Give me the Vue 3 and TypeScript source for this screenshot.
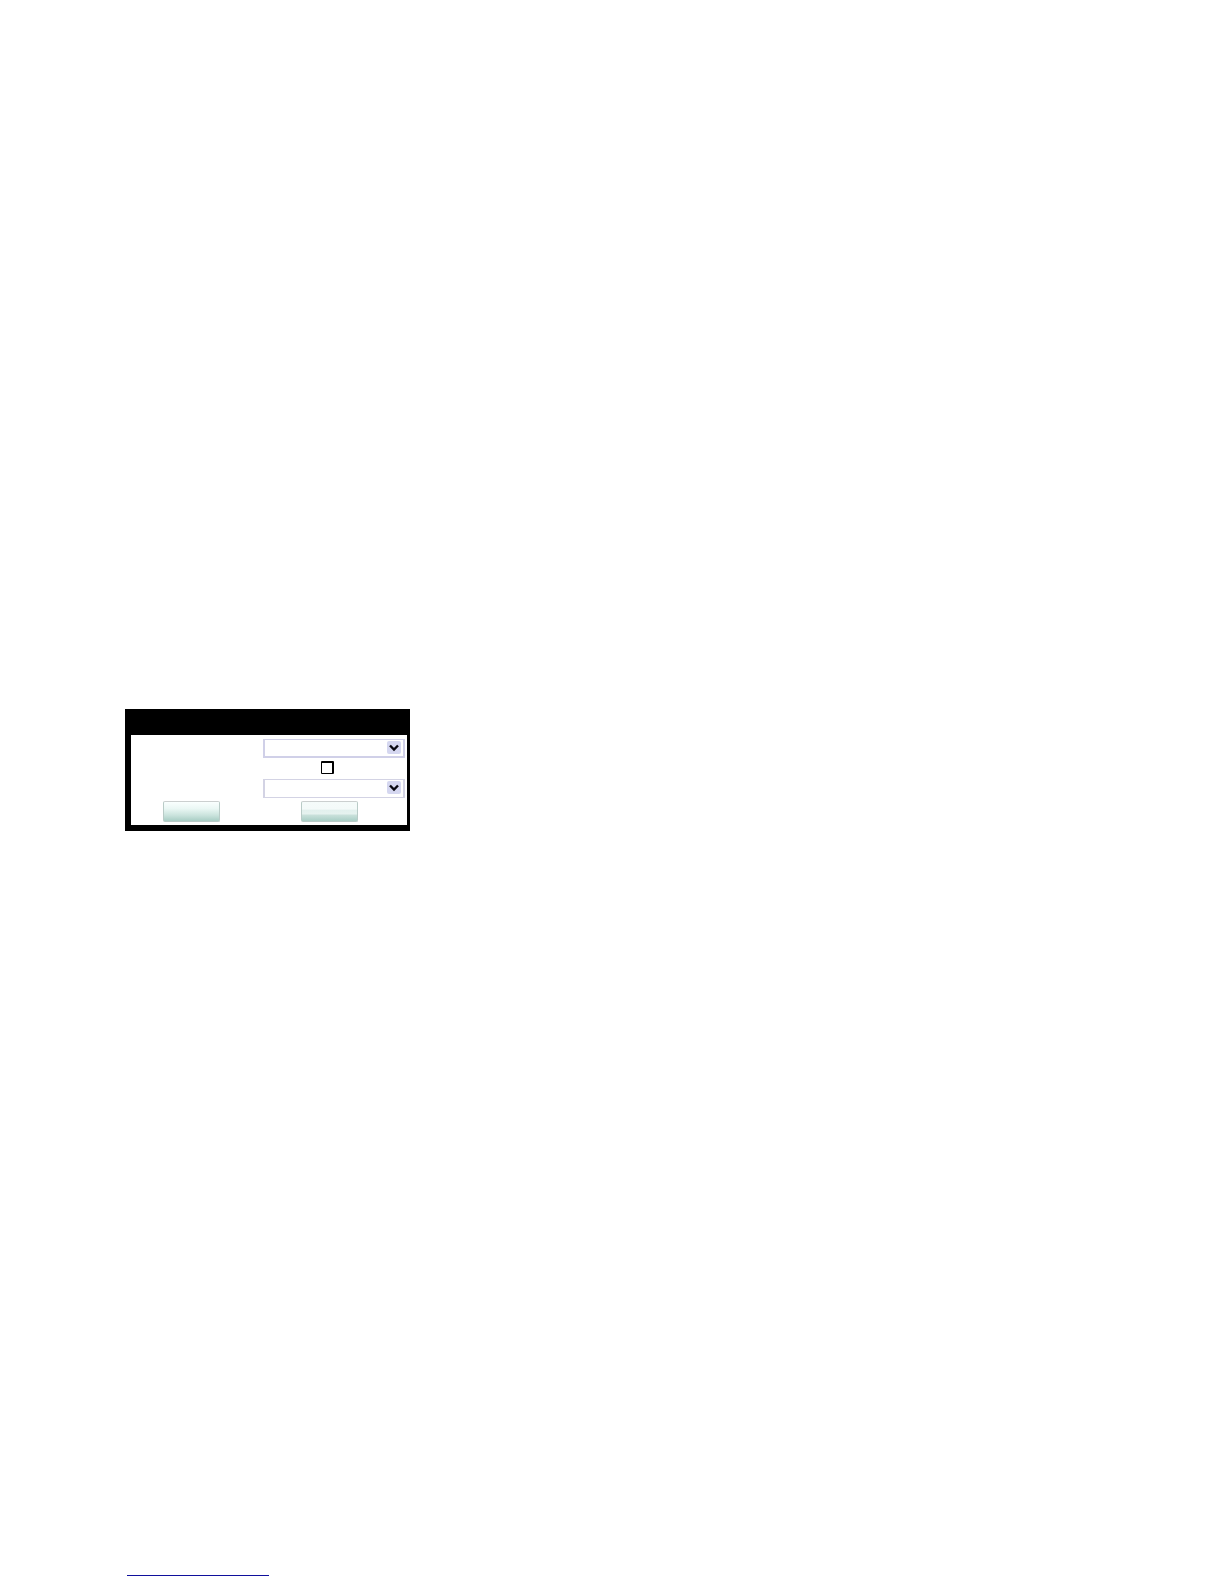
<script setup lang="ts">
import { ref } from 'vue'

const first = ref('')
const second = ref('')
const enabled = ref(false)
</script>

<template>
  <main class="page">
    <form class="panel" @submit.prevent>
      <div class="row">
        <label class="picker">
          <select v-model="first" class="select strong" aria-label="First option">
            <option value=""></option>
          </select>
          <svg class="arrow" viewBox="0 0 14 13" aria-hidden="true">
            <rect width="14" height="13" rx="2" fill="#d5d7f0" />
            <path d="M3 4.5 7 8.5 11 4.5" fill="none" stroke="#080810" stroke-width="2.4" />
          </svg>
        </label>
      </div>
      <div class="row check-row">
        <input v-model="enabled" class="check" type="checkbox" aria-label="Enable" />
      </div>
      <div class="row">
        <label class="picker">
          <select v-model="second" class="select" aria-label="Second option">
            <option value=""></option>
          </select>
          <svg class="arrow" viewBox="0 0 14 13" aria-hidden="true">
            <rect width="14" height="13" rx="2" fill="#d5d7f0" />
            <path d="M3 4.5 7 8.5 11 4.5" fill="none" stroke="#080810" stroke-width="2.4" />
          </svg>
        </label>
      </div>
      <div class="actions">
        <button class="button" type="submit" aria-label="Apply"></button>
        <button class="button banded" type="button" aria-label="Cancel"></button>
      </div>
    </form>
    <a class="link" href="#" aria-label="Link"></a>
  </main>
</template>

<style>
body {
  margin: 0;
  background: #fff;
  font-family: "Liberation Sans", Arial, sans-serif;
}
</style>

<style scoped>
.page {
  box-sizing: border-box;
  min-height: 100vh;
  padding: 709px 125px 8px;
  display: flex;
  flex-direction: column;
  align-items: flex-start;
}
.panel {
  box-sizing: border-box;
  width: 285px;
  padding: 4px 2px 3px 0;
  border: solid #000;
  border-width: 26px 3px 6px 6px;
  background: #fff;
  display: flex;
  flex-direction: column;
  gap: 3px;
}
.row {
  display: flex;
  padding-left: 132px;
}
.picker {
  position: relative;
  display: flex;
  flex: 1;
}
.select {
  appearance: none;
  box-sizing: border-box;
  width: 100%;
  height: 19px;
  margin: 0;
  padding: 0 20px 0 4px;
  border: solid #d3d3e4;
  border-width: 1px 2px 1px 2px;
  border-radius: 0;
  background: #fff;
  font-size: 12px;
}
.select.strong {
  border-color: #d0d0e8;
  border-bottom-width: 2px;
}
.arrow {
  position: absolute;
  top: 2px;
  right: 4px;
  width: 14px;
  height: 13px;
  pointer-events: none;
}
.check-row {
  height: 15px;
}
.check {
  appearance: none;
  box-sizing: border-box;
  width: 13px;
  height: 13px;
  margin: 0 0 0 58px;
  border: solid #000;
  border-width: 2px 2px 1px 1px;
  border-radius: 1px;
  background: #fff;
}
.check:checked {
  background: #000;
}
.actions {
  display: flex;
  gap: 81px;
  padding-left: 32px;
}
.button {
  box-sizing: border-box;
  width: 57px;
  height: 21px;
  margin: 0;
  padding: 0;
  border: 1px solid #b9cbc7;
  border-top-color: #cbcfcf;
  border-radius: 2px;
  background: linear-gradient(#fafffe, #eaf7f4 35%, #cae3dd 70%, #a8cdc4);
}
.button.banded {
  background: linear-gradient(#f5fbfa, #f4faf9 38%, #e2f0ed 42%, #e6f2ef 62%, #c8e0da 70%, #a9cec5);
}
.link {
  box-sizing: border-box;
  width: 142px;
  height: 16px;
  margin: auto 0 0 2px;
  border-bottom: 1px solid #10109c;
}
</style>
